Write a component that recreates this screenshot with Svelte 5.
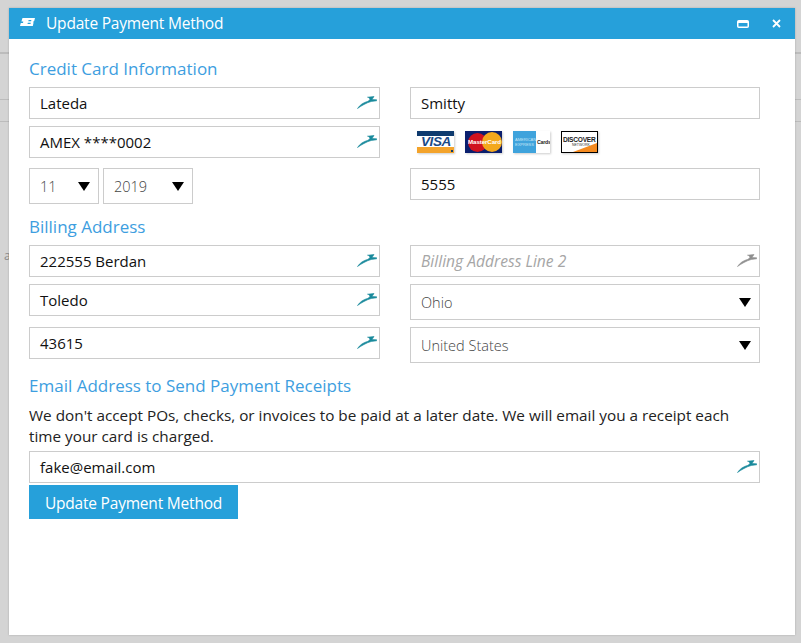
<script>
  const lines = [
    { top: 52, height: 2 },
    { top: 99, height: 1 },
    { top: 121, height: 1 },
  ];
</script>

{#snippet bird(muted)}
  <svg class="bird" class:muted viewBox="0 0 20 13" width="20" height="13">
    <path d="M0.5 12.5 C3 9 6 6.5 11 5.3 L13 3.5 C12.5 2.2 12 1.6 10.5 1.2 L17 0.5 L15 3.5 L19.7 3.8 L19.7 4.8 L14.2 5.5 C9 7 5 9.5 0.5 12.5 Z" />
  </svg>
{/snippet}

{#snippet field(value, placeholder = false)}
  <div class="input">
    <span class:ph={placeholder}>{value}</span>
    {@render bird(placeholder)}
  </div>
{/snippet}

{#snippet picker(value, extra = "")}
  <div class="select {extra}">
    <span>{value}</span>
    <svg class="caret" viewBox="0 0 12 9" width="12" height="9"><path d="M0 0 H12 L6 9 Z" /></svg>
  </div>
{/snippet}

<div class="backdrop">
  {#each lines as l}
    <div class="behind" style="top: {l.top}px; height: {l.height}px"></div>
  {/each}
  <span class="behind-text">a</span>

  <div class="modal">
    <header>
      <svg class="logo" viewBox="0 0 15 8" width="15" height="8">
        <path fill-rule="evenodd" d="M2.5 0 H15 L14.2 3 L13 4 L13.6 4.6 L12.8 8 H0 L0.8 5 H3 L3.3 3.6 H1.4 Z M8.6 2 H11.4 L11.1 3.2 H8.3 Z M7.8 4.8 H10.8 L10.5 6 H7.5 Z" />
      </svg>
      <span class="title">Update Payment Method</span>
      <svg class="win" viewBox="0 0 12 8" width="12" height="8"><rect x="0.75" y="0.75" width="10.5" height="6.5" rx="1" fill="none" stroke="#fff" stroke-width="1.5" /><rect x="1" y="1" width="10" height="2" fill="#fff" /></svg>
      <svg class="close" viewBox="0 0 9 9" width="9" height="9"><path d="M1 1 L8 8 M8 1 L1 8" stroke="#fff" stroke-width="1.8" /></svg>
    </header>

    <div class="body">
      <h2>Credit Card Information</h2>
      <div class="grid">
        <div class="col">
          {@render field("Lateda")}
          {@render field("AMEX ****0002")}
          <div class="dates">
            {@render picker("11", "month")}
            {@render picker("2019", "year")}
          </div>
        </div>
        <div class="col">
          <div class="input"><span>Smitty</span></div>
          <div class="cards">
            <div class="card visa"><i></i><b>VISA</b><u></u><em></em></div>
            <div class="card mc"><i></i><s></s><b>MasterCard</b></div>
            <div class="card amex"><i></i><small>AMERICAN<br />EXPRESS</small><b>Cards</b></div>
            <div class="card disc"><i></i><b>DISCOVER</b><small>NETWORK</small></div>
          </div>
          <div class="input"><span>5555</span></div>
        </div>
      </div>

      <h2 class="billing">Billing Address</h2>
      <div class="grid">
        <div class="col">
          {@render field("222555 Berdan")}
          {@render field("Toledo")}
          <div class="third">{@render field("43615")}</div>
        </div>
        <div class="col">
          {@render field("Billing Address Line 2", true)}
          {@render picker("Ohio")}
          {@render picker("United States")}
        </div>
      </div>

      <h2 class="email">Email Address to Send Payment Receipts</h2>
      <p>We don't accept POs, checks, or invoices to be paid at a later date. We will email you a receipt each time your card is charged.</p>
      {@render field("fake@email.com")}
      <button type="button">Update Payment Method</button>
    </div>
  </div>
</div>

<style>
  :global(body) { margin: 0; background: #d4d4d4; }
  .backdrop { position: relative; width: 801px; height: 643px; padding: 8px 6px 8px 9px; box-sizing: border-box; overflow: hidden; font-family: "Open Sans", "Noto Sans", sans-serif; }
  .behind { position: absolute; left: 0; right: 0; background: #bcbcbc; }
  .behind-text { position: absolute; left: 4px; top: 248px; font-size: 12px; line-height: 16px; color: #8a8a8a; }
  .modal { position: relative; width: 786px; height: 627px; background: #fff; box-shadow: 0 0 2px rgba(0,0,0,.2); }
  header { height: 31px; background: #26a0da; color: #fff; display: flex; align-items: center; padding: 0 14px 0 11px; }
  .logo { fill: #fff; margin-top: -3px; }
  .title { font-size: 15.5px; letter-spacing: -.2px; margin-left: 11px; flex: 1; margin-top: -2px; }
  .win { margin-right: 23px; }
  .body { padding: 18px 35px 0 20px; }
  h2 { font-size: 17px; font-weight: 400; color: #3d9ee0; margin: 0; line-height: 24px; height: 24px; }
  .grid { display: grid; grid-template-columns: 351px 350px; column-gap: 30px; margin-top: 6px; }
  .col { display: flex; flex-direction: column; gap: 7px; }
  .input { height: 32px; box-sizing: border-box; border: 1px solid #ccc; display: flex; align-items: center; justify-content: space-between; padding: 0 2px 0 10px; font-size: 15px; color: #111; }
  .ph { color: #a6a6a6; font-style: italic; font-size: 15.6px; }
  .bird { fill: #1a8a9c; stroke: #1a8a9c; stroke-width: .6; margin-top: -1px; }
  .bird.muted { fill: #8f8f8f; stroke: #8f8f8f; }
  .select { height: 36px; box-sizing: border-box; border: 1px solid #ccc; display: flex; align-items: center; justify-content: space-between; padding: 0 8px 0 10px; font-size: 14.5px; font-weight: 300; color: #444; }
  .caret { fill: #000; }
  .dates { display: flex; gap: 4px; margin-top: 3px; }
  .month { width: 70px; }
  .year { width: 90px; }
  .third { margin-top: 4px; }
  .cards { height: 35px; display: flex; gap: 11px; padding: 5px 0 0 7px; box-sizing: border-box; }
  .card { width: 37px; height: 22px; position: relative; overflow: hidden; box-shadow: 1px 1px 2px rgba(0,0,0,.2); box-sizing: border-box; font-family: "Liberation Sans", sans-serif; }
  .card b, .card small { position: absolute; white-space: nowrap; }
  .visa { background: #fff; }
  .visa i { position: absolute; left: 0; top: 0; width: 100%; height: 5px; background: #0e3a6e; }
  .visa u { position: absolute; left: 0; bottom: 0; width: 100%; height: 6px; background: #f3a32b; }
  .visa em { position: absolute; right: 1px; bottom: 1px; width: 2px; height: 2px; background: #0e3a6e; }
  .visa b { left: 4px; top: 4px; font-size: 13.5px; line-height: 13px; font-style: italic; color: #1a4a86; letter-spacing: -.4px; font-weight: 900; z-index: 1; }
  .mc { background: #0a1f6e; }
  .mc i { position: absolute; left: 3px; top: 1.5px; width: 19px; height: 19px; border-radius: 50%; background: #d0121f; }
  .mc s { position: absolute; left: 17px; top: 1px; width: 20px; height: 20px; border-radius: 50%; background: #f4a81c; }
  .mc b { left: 3px; top: 7px; font-size: 6.2px; line-height: 8px; color: #fff; letter-spacing: -.1px; }
  .amex { background: #fff; }
  .amex i { position: absolute; left: 0; top: 0; width: 23px; height: 22px; background: #3fa3dc; }
  .amex small { left: 2px; top: 6px; font-size: 4px; line-height: 5px; color: #c9e6f7; }
  .amex b { left: 24px; top: 8px; font-size: 5.2px; line-height: 7px; color: #222; letter-spacing: -.2px; }
  .disc { background: #fff; border: 1.5px solid #000; }
  .disc b { left: 1px; top: 2.5px; font-size: 6.6px; line-height: 9px; color: #222; letter-spacing: -.25px; }
  .disc small { left: 10px; top: 11px; font-size: 3.5px; line-height: 4px; color: #333; }
  .disc i { position: absolute; right: 0; bottom: 0; width: 24px; height: 9px; background: #f58a1f; clip-path: polygon(100% 0, 100% 100%, 0 100%); }
  .billing { margin-top: 11px; }
  .email { margin-top: 11px; }
  p { font-size: 15.3px; line-height: 21px; color: #222; margin: 7px 0 4px; }
  button { display: block; margin-top: 2px; width: 209px; height: 34px; border: 0; background: #26a0da; color: #fff; font-family: inherit; font-size: 15.5px; letter-spacing: -.2px; padding: 1px 0 0; }
</style>
